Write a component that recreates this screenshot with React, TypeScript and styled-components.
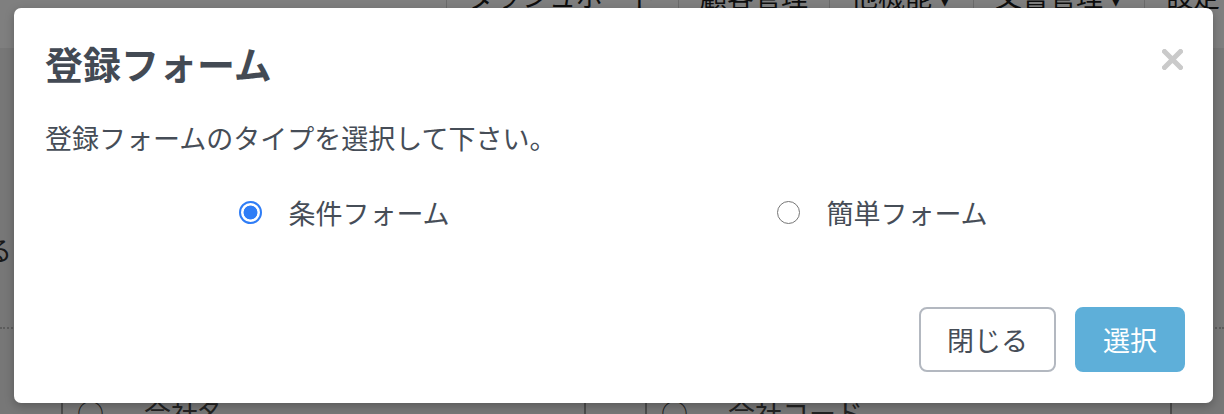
import React, { useState } from "react";
import styled, { createGlobalStyle } from "styled-components";

const GlobalStyle = createGlobalStyle`
  html, body {
    margin: 0;
    padding: 0;
    width: 1224px;
    height: 414px;
    overflow: hidden;
    font-family: "Noto Sans CJK JP", "Noto Sans", sans-serif;
  }
  * { box-sizing: border-box; }
`;

const Page = styled.div`
  position: relative;
  width: 1224px;
  height: 414px;
  background: #eeeeee;
  display: flex;
  flex-direction: column;
  overflow: hidden;
`;

const Header = styled.header`
  flex-shrink: 0;
  height: 48px;
  background: #ffffff;
  display: flex;
  padding-left: 446px;
  overflow: hidden;
`;

const NavItem = styled.div`
  margin-top: -22px;
  height: 70px;
  padding: 0 21px;
  border-left: 1px solid #d6d6d6;
  font-size: 27px;
  line-height: 36px;
  color: #1c1c1c;
  white-space: nowrap;
`;

const Main = styled.main`
  flex-shrink: 0;
  display: flex;
  flex-direction: column;
`;

const CutText = styled.div`
  margin: 187px 0 0 -15px;
  font-size: 27px;
  line-height: 30px;
  color: #333;
`;

const Dotted = styled.hr`
  margin: 62px 0 0;
  border: 0;
  border-top: 2px dotted #bbbbbb;
`;

const TableRow = styled.div`
  margin: 64px 0 0;
  display: grid;
  grid-template-columns: 61px 523px 61px 525px 1fr;
  height: 60px;
`;

const Cell = styled.div<{ $line?: boolean }>`
  border-left: ${(p) => (p.$line ? "2px solid #999" : "0")};
  font-size: 27px;
  line-height: 40px;
  color: #444;
  padding-left: 14px;
  white-space: nowrap;
  display: flex;
  gap: 40px;
`;

const Backdrop = styled.div`
  position: absolute;
  inset: 0;
  background: rgba(0, 0, 0, 0.5);
`;

const Modal = styled.div`
  margin: 8px 11px 0 14px;
  background: #ffffff;
  border-radius: 7px;
  box-shadow: 0 3px 10px rgba(0, 0, 0, 0.25);
  padding-bottom: 31px;
  display: flex;
  flex-direction: column;
  color: #464d57;
`;

const ModalHeader = styled.div`
  display: flex;
  justify-content: space-between;
  align-items: flex-start;
  padding: 32px 30px 0 31px;
`;

const Title = styled.h2`
  margin: 0;
  font-size: 38px;
  line-height: 46px;
  font-weight: 700;
  color: #434a54;
`;

const CloseButton = styled.button`
  margin-top: 9px;
  border: 0;
  padding: 0;
  background: transparent;
  width: 21px;
  height: 21px;
  cursor: pointer;
  display: flex;
`;

const BodyText = styled.p`
  margin: 32px 0 0 31px;
  font-size: 27px;
  line-height: 40px;
`;

const OptionRow = styled.div`
  margin-top: 34px;
  display: flex;
  justify-content: center;
`;

const OptionCol = styled.label`
  width: 538px;
  height: 40px;
  display: flex;
  align-items: center;
  justify-content: center;
  gap: 26px;
  font-size: 27px;
  cursor: pointer;
`;

const Radio = styled.input`
  appearance: none;
  margin: 0;
  width: 23px;
  height: 23px;
  border-radius: 50%;
  border: 1.5px solid #767676;
  background: #fff;
  &:checked {
    border: 2px solid #2f7df6;
    background: radial-gradient(circle, #2f7df6 0 6.6px, #ffffff 7.3px);
  }
`;

const Footer = styled.div`
  margin-top: 75px;
  padding-right: 28px;
  display: flex;
  justify-content: flex-end;
  gap: 19px;
`;

const Button = styled.button<{ $primary?: boolean }>`
  height: 65px;
  padding: 0 26px;
  border-radius: 8px;
  font-family: inherit;
  font-size: 27px;
  cursor: pointer;
  border: 2px solid ${(p) => (p.$primary ? "#5eafd9" : "#b3b8c0")};
  background: ${(p) => (p.$primary ? "#5eafd9" : "#ffffff")};
  color: ${(p) => (p.$primary ? "#ffffff" : "#464d57")};
`;

export default function App() {
  const [type, setType] = useState("condition");
  return (
    <>
      <GlobalStyle />
      <Page>
        <Header>
          <NavItem>ダッシュボード</NavItem>
          <NavItem>顧客管理</NavItem>
          <NavItem>他機能 ▾</NavItem>
          <NavItem>文書管理 ▾</NavItem>
          <NavItem>設定</NavItem>
        </Header>
        <Main>
          <CutText>る</CutText>
          <Dotted />
          <TableRow>
            <Cell />
            <Cell $line>
              <span>○</span>
              <span>会社名</span>
            </Cell>
            <Cell $line />
            <Cell $line>
              <span>○</span>
              <span>会社コード</span>
            </Cell>
            <Cell $line />
          </TableRow>
        </Main>
        <Backdrop>
          <Modal>
            <ModalHeader>
              <Title>登録フォーム</Title>
              <CloseButton aria-label="close">
                <svg width="21" height="21" viewBox="0 0 21 21">
                  <path
                    d="M2.5 2.5 L18.5 18.5 M18.5 2.5 L2.5 18.5"
                    stroke="#cacaca"
                    strokeWidth="5"
                    strokeLinecap="square"
                  />
                </svg>
              </CloseButton>
            </ModalHeader>
            <BodyText>登録フォームのタイプを選択して下さい。</BodyText>
            <OptionRow>
              <OptionCol>
                <Radio
                  type="radio"
                  name="formType"
                  checked={type === "condition"}
                  onChange={() => setType("condition")}
                />
                <span>条件フォーム</span>
              </OptionCol>
              <OptionCol>
                <Radio
                  type="radio"
                  name="formType"
                  checked={type === "simple"}
                  onChange={() => setType("simple")}
                />
                <span>簡単フォーム</span>
              </OptionCol>
            </OptionRow>
            <Footer>
              <Button>閉じる</Button>
              <Button $primary>選択</Button>
            </Footer>
          </Modal>
        </Backdrop>
      </Page>
    </>
  );
}
